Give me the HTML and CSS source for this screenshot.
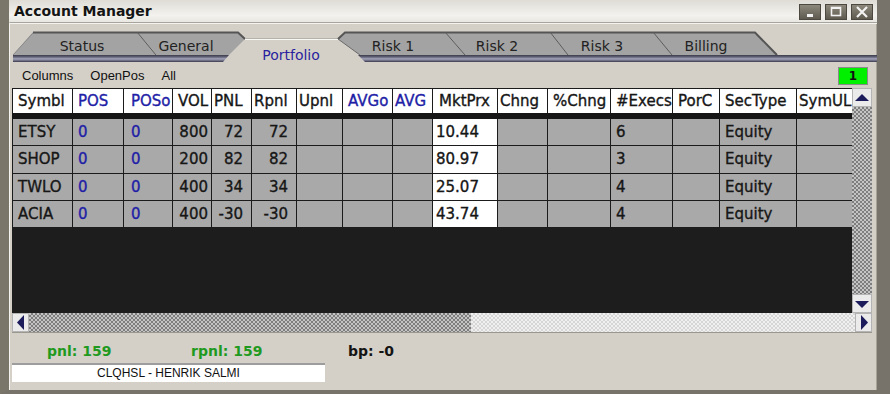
FILE: index.html
```html
<!DOCTYPE html>
<html>

<head>
    <title>Account Manager</title>

    <!-- For styling -->
    <link rel="stylesheet" href="styles.css">
</head>

<body>
    <div class="window">

        <!-- Title bar -->
        <div class="titlebar">
            <span class="title">Account Manager</span>
            <div class="winbtns">
                <span class="wbtn">
                    <svg width="22" height="16" viewBox="0 0 22 16"><rect x="8" y="10" width="6" height="3" fill="#f2f2f2"/></svg>
                </span>
                <span class="wbtn">
                    <svg width="22" height="16" viewBox="0 0 22 16"><rect x="6.5" y="3.5" width="9" height="8" fill="none" stroke="#f2f2f2" stroke-width="1.6"/><rect x="6" y="3" width="10" height="2" fill="#f2f2f2"/></svg>
                </span>
                <span class="wbtn">
                    <svg width="22" height="16" viewBox="0 0 22 16"><path d="M6 3 L16 13 M16 3 L6 13" stroke="#f2f2f2" stroke-width="2.2"/></svg>
                </span>
            </div>
        </div>

        <div class="panel">

            <!-- Tab strip -->
            <svg class="tabs" width="867" height="40" viewBox="10 24 867 40">
                <defs>
                    <linearGradient id="band" x1="0" y1="0" x2="0" y2="1">
                        <stop offset="0" stop-color="#3a3a48"/>
                        <stop offset="0.3" stop-color="#66667c"/>
                        <stop offset="0.55" stop-color="#a4a4ba"/>
                        <stop offset="0.8" stop-color="#6c6c82"/>
                        <stop offset="1" stop-color="#38384a"/>
                    </linearGradient>
                </defs>
                <!-- left group -->
                <polygon points="33,33 137,33 157,56 13,56" fill="#a3a3a3"/>
                <polygon points="137,33 238,33 245,40 229,56 157,56" fill="#a3a3a3"/>
                <polyline points="33,33.5 238,33.5 245,40" fill="none" stroke="#555" stroke-width="2"/>
                <line x1="137" y1="33" x2="156" y2="56" stroke="#5a5a5a" stroke-width="1"/>
                <line x1="33" y1="34" x2="13" y2="56" stroke="#8a8a8a" stroke-width="1"/>
                <polygon points="13,56 229,56 223,63 13,63" fill="url(#band)"/>
                <!-- active tab highlight -->
                <line x1="245" y1="40.5" x2="338" y2="40.5" stroke="#f7f7f4" stroke-width="1"/>
                <line x1="245" y1="39.5" x2="338" y2="39.5" stroke="#b4b2aa" stroke-width="1"/>
                <!-- right group -->
                <polygon points="345,33 445,33 465,56 360,56 338,40" fill="#a3a3a3"/>
                <polygon points="445,33 550,33 568,56 465,56" fill="#a3a3a3"/>
                <polygon points="550,33 653,33 672,56 568,56" fill="#a3a3a3"/>
                <polygon points="653,33 755,33 777,56 672,56" fill="#a3a3a3"/>
                <polyline points="338,40 345,33.5 755,33.5 777,56" fill="none" stroke="#555" stroke-width="2"/>
                <line x1="338" y1="40" x2="360" y2="56" stroke="#6a6a6a" stroke-width="1"/>
                <line x1="445" y1="33" x2="465" y2="56" stroke="#5a5a5a" stroke-width="1"/>
                <line x1="550" y1="33" x2="568" y2="56" stroke="#5a5a5a" stroke-width="1"/>
                <line x1="653" y1="33" x2="672" y2="56" stroke="#5a5a5a" stroke-width="1"/>
                <polygon points="358,56 877,56 877,63 365,63" fill="url(#band)"/>
                <!-- labels -->
                <g class="tablabel">
                    <text x="82" y="52">Status</text>
                    <text x="186" y="52">General</text>
                    <text x="393" y="52">Risk 1</text>
                    <text x="497" y="52">Risk 2</text>
                    <text x="602" y="52">Risk 3</text>
                    <text x="706" y="52">Billing</text>
                </g>
                <text class="tablabel active" x="291" y="61">Portfolio</text>
            </svg>

            <!-- Toolbar -->
            <div class="toolbar">
                <span class="tool">Columns</span>
                <span class="tool">OpenPos</span>
                <span class="tool">All</span>
                <span class="count">1</span>
            </div>

            <!-- Grid + vertical scroll -->
            <div class="gridwrap">
                <div class="grid">
                    <table>
                        <colgroup>
                            <col style="width:60px"><col style="width:51px"><col style="width:49px"><col style="width:39px">
                            <col style="width:40px"><col style="width:45px"><col style="width:46px"><col style="width:50px">
                            <col style="width:40px"><col style="width:65px"><col style="width:50px"><col style="width:63px">
                            <col style="width:62px"><col style="width:47px"><col style="width:77px"><col style="width:56px">
                        </colgroup>
                        <tr>
                            <th>Symbl</th><th class="b">POS</th><th class="b po">POSo</th><th>VOL</th>
                            <th class="tight">PNL</th><th class="tight">Rpnl</th><th class="tight">Upnl</th><th class="b">AVGo</th>
                            <th class="b tight">AVG</th><th class="mk">MktPrx</th><th class="tight">Chng</th><th>%Chng</th>
                            <th>#Execs</th><th>PorC</th><th>SecType</th><th class="tight">SymUL</th>
                        </tr>
                        <tr>
                            <td>ETSY</td><td class="b">0</td><td class="b po">0</td><td class="r vol">800</td>
                            <td class="r">72</td><td class="r">72</td><td></td><td></td>
                            <td></td><td class="w">10.44</td><td></td><td></td>
                            <td>6</td><td></td><td>Equity</td><td></td>
                        </tr>
                        <tr>
                            <td>SHOP</td><td class="b">0</td><td class="b po">0</td><td class="r vol">200</td>
                            <td class="r">82</td><td class="r">82</td><td></td><td></td>
                            <td></td><td class="w">80.97</td><td></td><td></td>
                            <td>3</td><td></td><td>Equity</td><td></td>
                        </tr>
                        <tr>
                            <td>TWLO</td><td class="b">0</td><td class="b po">0</td><td class="r vol">400</td>
                            <td class="r">34</td><td class="r">34</td><td></td><td></td>
                            <td></td><td class="w">25.07</td><td></td><td></td>
                            <td>4</td><td></td><td>Equity</td><td></td>
                        </tr>
                        <tr>
                            <td>ACIA</td><td class="b">0</td><td class="b po">0</td><td class="r vol">400</td>
                            <td class="r">-30</td><td class="r">-30</td><td></td><td></td>
                            <td></td><td class="w">43.74</td><td></td><td></td>
                            <td>4</td><td></td><td>Equity</td><td></td>
                        </tr>
                    </table>
                </div>
                <div class="vscroll">
                    <div class="sbtn">
                        <svg width="16" height="14" viewBox="0 0 16 14"><polygon points="1,10 8,3 15,10" fill="#1c1c5c"/></svg>
                    </div>
                    <div class="vtrack"></div>
                    <div class="sbtn">
                        <svg width="16" height="14" viewBox="0 0 16 14"><polygon points="1,4 15,4 8,11" fill="#1c1c5c"/></svg>
                    </div>
                </div>
            </div>

            <!-- Horizontal scroll -->
            <div class="hscroll">
                <div class="hbtn">
                    <svg width="14" height="17" viewBox="0 0 14 17"><polygon points="10,1 10,16 3,8.5" fill="#1c1c5c"/></svg>
                </div>
                <div class="hthumb"></div>
                <div class="htrack"></div>
                <div class="hbtn">
                    <svg width="14" height="17" viewBox="0 0 14 17"><polygon points="4,1 4,16 11,8.5" fill="#1c1c5c"/></svg>
                </div>
            </div>

            <!-- Totals -->
            <div class="totals">
                <span class="total green pnl">pnl: 159</span>
                <span class="total green rpnl">rpnl: 159</span>
                <span class="total">bp: -0</span>
            </div>

            <div class="account">CLQHSL - HENRIK SALMI</div>
        </div>
    </div>
</body>

</html>
```

FILE: styles.css
```css
body {
    margin: 0;
    background-color: #d4d0c8;
}

.window {
    width: 890px;
    height: 394px;
    box-sizing: border-box;
    border-left: 9px solid #7b766a;
    border-right: 13px solid #77726a;
    border-bottom: 4px solid #77726a;
    box-shadow: inset 1px 0 0 #a8a397, inset -1px 0 0 #a8a397;
    display: flex;
    flex-direction: column;
    background-color: #d4d0c8;
}

.titlebar {
    height: 22px;
    flex: none;
    display: flex;
    align-items: center;
    justify-content: space-between;
    background: linear-gradient(to bottom, #dedcd5, #f3f2ee 70%, #e9e7e1);
    padding-left: 5px;
    padding-right: 4px;
}

.title {
    font-family: "DejaVu Sans", sans-serif;
    font-size: 14px;
    font-weight: bold;
    color: #141414;
}

.winbtns {
    display: flex;
    gap: 4px;
    margin-top: 1px;
}

.wbtn {
    display: block;
    width: 22px;
    height: 16px;
    background: linear-gradient(to bottom, #8d887c, #5f5a4f);
    border: 1px solid #4c483f;
    box-sizing: border-box;
}

.wbtn svg {
    display: block;
    margin: -1px 0 0 -1px;
}

.panel {
    flex: 1;
    display: flex;
    flex-direction: column;
    border-top: 1px solid #a7a49b;
    border-left: 1px solid #f4f3ef;
    box-shadow: inset 0 1px 0 #f4f3ef;
}

.tabs {
    display: block;
    flex: none;
}

.tablabel {
    font-family: "DejaVu Sans", sans-serif;
    font-size: 14px;
    fill: #222;
    text-anchor: middle;
}

.tablabel.active {
    fill: #2b1f9e;
}

.toolbar {
    height: 25px;
    flex: none;
    display: flex;
    align-items: center;
    padding-left: 12px;
    font-family: "Liberation Sans", sans-serif;
    font-size: 13px;
    color: #111;
}

.tool {
    margin-right: 17px;
}

.count {
    margin-left: auto;
    margin-right: 9px;
    width: 30px;
    height: 18px;
    box-sizing: border-box;
    background-color: #00f000;
    border: 1px solid #8a8a8a;
    text-align: center;
    font-family: "DejaVu Sans", sans-serif;
    font-weight: bold;
    font-size: 12px;
    line-height: 16px;
}

.gridwrap {
    display: flex;
    height: 225px;
    flex: none;
    margin-left: 2px;
}

.grid {
    width: 840px;
    height: 225px;
    background-color: #1d1d1d;
    overflow: hidden;
}

table {
    border-collapse: collapse;
    table-layout: fixed;
    width: 840px;
    font-family: "DejaVu Sans", sans-serif;
    font-size: 15px;
    color: #161616;
    -webkit-text-stroke: 0.35px currentColor;
}

th,
td {
    border: 1px dotted #1a1a1a;
    padding: 0 0 0 5px;
    text-align: left;
    white-space: nowrap;
    overflow: hidden;
}

th {
    height: 24px;
    background-color: #fff;
    font-weight: normal;
    border-bottom: 6px solid #161616;
}

td {
    height: 26.3px;
    background-color: #a9a9a9;
}

th.tight {
    padding-left: 2px;
}

th.mk {
    padding-left: 6px;
}

.po {
    padding-left: 7px;
}

.b {
    color: #1e1ea6;
}

td.r {
    text-align: right;
    padding: 0 8px 0 0;
}

td.vol {
    padding-right: 3px;
}

td.w {
    background-color: #fff;
    padding-left: 3px;
}

.vscroll {
    width: 20px;
    display: flex;
    flex-direction: column;
}

.sbtn {
    height: 19px;
    flex: none;
    box-sizing: border-box;
    background-color: #ebebeb;
    border: 1px solid #b4b4b4;
    display: flex;
    align-items: center;
    justify-content: center;
}

.vtrack {
    flex: 1;
    background: repeating-conic-gradient(#7e7e7e 0 25%, #c4c4c4 0 50%) 0 0 / 4px 4px;
}

.hscroll {
    height: 19px;
    flex: none;
    display: flex;
    margin-left: 2px;
    width: 860px;
    border-bottom: 1px solid #9a978f;
}

.hbtn {
    width: 17px;
    flex: none;
    box-sizing: border-box;
    background-color: #ebebeb;
    border: 1px solid #b4b4b4;
    display: flex;
    align-items: center;
    justify-content: center;
}

.hthumb {
    width: 442px;
    background: repeating-conic-gradient(#7e7e7e 0 25%, #c4c4c4 0 50%) 0 0 / 4px 4px;
}

.htrack {
    flex: 1;
    background: repeating-conic-gradient(#d6d6d6 0 25%, #f0f0f0 0 50%) 0 0 / 4px 4px;
}

.totals {
    height: 30px;
    flex: none;
    display: flex;
    align-items: flex-end;
    padding-left: 37px;
    font-family: "DejaVu Sans", sans-serif;
    font-size: 14px;
    font-weight: bold;
    color: #141414;
}

.total {
    line-height: 20px;
    padding-bottom: 2px;
}

.pnl {
    width: 144px;
}

.rpnl {
    width: 157px;
}

.green {
    color: #1f9a1f;
}

.account {
    width: 313px;
    height: 19px;
    box-sizing: border-box;
    margin-left: 2px;
    background-color: #fff;
    border-top: 2px solid #9d9d9d;
    text-align: center;
    font-family: "Liberation Sans", sans-serif;
    font-size: 12px;
    line-height: 16px;
    color: #111;
}
```
